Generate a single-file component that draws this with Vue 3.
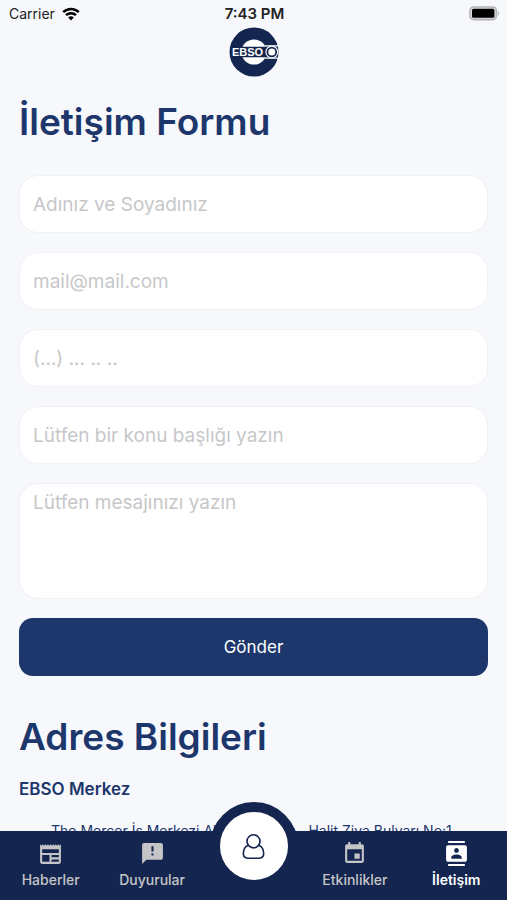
<template>
    <div class="screen">
        <header class="header">
            <div class="status-bar">
                <div class="carrier">
                    <span>Carrier</span>
                    <svg class="wifi" viewBox="0 0 18 14" aria-hidden="true">
                        <path d="M1.2 5.2a11.2 11.2 0 0 1 15.6 0" />
                        <path d="M4 8.2a7.2 7.2 0 0 1 10 0" />
                        <path class="wifi-dot" d="M9 13.4 6.2 10.6a4 4 0 0 1 5.6 0z" />
                    </svg>
                </div>
                <span class="clock">7:43 PM</span>
                <svg class="battery" viewBox="0 0 31 15" aria-hidden="true">
                    <rect x="1" y="1" width="26.4" height="12.6" rx="3.6" fill="#dcdde0" stroke="#b3b4b7" stroke-width="1.6" />
                    <rect x="3" y="2.8" width="22.4" height="9" rx="1.6" fill="#000" />
                    <path d="M28.8 5q2.2 2.4 0 4.8z" fill="#a4a5a8" />
                </svg>
            </div>
            <svg class="logo" viewBox="0 0 50 50" role="img" aria-label="EBSO">
                <circle cx="25" cy="25" r="24.5" fill="#14264f" />
                <circle cx="25" cy="25" r="12.6" fill="#fff" />
                <path d="M3 19.8h46v10.4H3z" fill="#14264f" />
                <path d="M36 18.2h14v1.4H36zM36 30.4h14v1.4H36z" fill="#fff" />
                <circle cx="42.8" cy="25" r="6.4" fill="#fff" />
                <circle cx="42.8" cy="25" r="4.4" fill="#fff" stroke="#14264f" stroke-width="1.8" />
                <text x="3" y="29" class="logo-text">EBSO</text>
            </svg>
        </header>

        <main class="content">
            <h1 class="title">İletişim Formu</h1>

            <form class="form" @submit.prevent="handleSubmit">
                <input
                    v-for="field in fields"
                    :key="field.name"
                    v-model="form[field.name]"
                    class="field"
                    :type="field.type"
                    :name="field.name"
                    :placeholder="field.placeholder"
                    :aria-label="field.placeholder"
                />
                <textarea
                    v-model="form.message"
                    class="field field-message"
                    name="message"
                    placeholder="Lütfen mesajınızı yazın"
                    aria-label="Lütfen mesajınızı yazın"
                ></textarea>
                <button type="submit" class="submit">Gönder</button>
            </form>

            <section class="addresses">
                <h2 class="title">Adres Bilgileri</h2>
                <h3 class="branch">EBSO Merkez</h3>
                <div class="address">
                    <svg class="pin" viewBox="0 0 18 22" aria-hidden="true">
                        <path d="M9 2a7 7 0 0 0-7 7c0 5 7 12 7 12s7-7 7-12a7 7 0 0 0-7-7z" />
                        <circle cx="9" cy="9" r="2.5" />
                    </svg>
                    <span>The Mercer İş Merkezi Alsancak Mah., Halit Ziya Bulvarı No:1</span>
                </div>
            </section>
        </main>

        <nav class="tab-bar">
            <a
                v-for="tab in tabs"
                :key="tab.label"
                href="#"
                class="tab"
                :class="[{ active: tab.active }, tab.side]"
                @click.prevent
            >
                <svg class="tab-icon" viewBox="0 0 24 24" aria-hidden="true">
                    <path :d="tab.icon" />
                </svg>
                <span>{{ tab.label }}</span>
            </a>
            <button type="button" class="profile" aria-label="Profil">
                <svg viewBox="0 0 24 28" aria-hidden="true">
                    <circle cx="12" cy="8.6" r="6.8" />
                    <path d="M6.4 12.6C3 14 1.4 17.4 1.4 21.4c0 3.2 1.6 4.8 4.6 4.8h12c3 0 4.600-1.600 4.600-4.800 0-4-1.600-7.400-5-8.800" />
                </svg>
            </button>
        </nav>
    </div>
</template>

<script setup>
import { reactive } from 'vue'

const form = reactive({
    name: '',
    email: '',
    phone: '',
    subject: '',
    message: '',
})

const fields = [
    { name: 'name', type: 'text', placeholder: 'Adınız ve Soyadınız' },
    { name: 'email', type: 'email', placeholder: 'mail@mail.com' },
    { name: 'phone', type: 'tel', placeholder: '(...) ... .. ..' },
    { name: 'subject', type: 'text', placeholder: 'Lütfen bir konu başlığı yazın' },
]

const tabs = [
    {
        label: 'Haberler',
        icon: 'M2 3l1.25 1.5L4.5 3l1.25 1.5L7 3l1.25 1.5L9.5 3l1.25 1.5L12 3l1.25 1.5L14.5 3l1.25 1.5L17 3l1.25 1.5L19.5 3l1.25 1.5L22 3v17c0 1.1-.9 2-2 2H4c-1.1 0-2-.9-2-2V3zM4 8v3.5h16V8H4zm0 5.5V20h7v-6.5H4zm9 0v2.2h7v-2.2h-7zm0 4.2V20h7v-2.3h-7z',
    },
    {
        label: 'Duyurular',
        icon: 'M20 2H4c-1.1 0-1.99.9-1.99 2L2 22l4-4h14c1.1 0 2-.9 2-2V4c0-1.1-.9-2-2-2zm-7 12h-2v-2h2v2zm0-4h-2V5h2v5z',
    },
    {
        label: 'Etkinlikler',
        side: 'after-profile',
        icon: 'M17 12h-5v5h5v-5zM16 1v2H8V1H6v2H5c-1.11 0-1.99.9-1.99 2L3 19c0 1.1.89 2 2 2h14c1.1 0 2-.9 2-2V5c0-1.1-.9-2-2-2h-1V1h-2zm3 18H5V8h14v11z',
    },
    {
        label: 'İletişim',
        active: true,
        icon: 'M20 0H4v2h16V0zM4 24h16v-2H4v2zM20 4H4c-1.1 0-2 .9-2 2v12c0 1.1.9 2 2 2h16c1.1 0 2-.9 2-2V6c0-1.1-.9-2-2-2zm-8 2.75c1.24 0 2.25 1.01 2.25 2.25s-1.01 2.25-2.25 2.25S9.75 10.24 9.75 9 10.76 6.75 12 6.75zM17 17H7v-1.5c0-1.67 3.33-2.5 5-2.5s5 .83 5 2.5V17z',
    },
]

const handleSubmit = () => {
    Object.keys(form).forEach(key => {
        form[key] = ''
    })
}
</script>

<style>
body {
    background-color: #f6f8fc;
}
</style>

<style scoped>
.screen {
    display: flex;
    flex-direction: column;
    height: 100vh;
    background-color: #f6f8fc;
    font-family: 'Inter', 'Liberation Sans', sans-serif;
}

.header {
    display: flex;
    flex-direction: column;
    align-items: center;
    flex: none;
}

.status-bar {
    display: grid;
    grid-template-columns: 1fr auto 1fr;
    align-items: center;
    box-sizing: border-box;
    width: 100%;
    height: 27px;
    padding: 0 7px 0 9px;
    font-size: 14px;
    color: #222;
}

.carrier {
    display: flex;
    align-items: center;
    gap: 7px;
}

.wifi {
    width: 18px;
    height: 14px;
    fill: none;
    stroke: #000;
    stroke-width: 2.4;
}

.wifi .wifi-dot {
    fill: #000;
    stroke: none;
}

.clock {
    font-size: 15px;
    font-weight: 600;
}

.battery {
    width: 31px;
    height: 15px;
    justify-self: end;
}

.logo {
    width: 50px;
    height: 50px;
}

.logo-text {
    font-family: 'Liberation Sans', sans-serif;
    font-size: 11px;
    font-weight: 700;
    fill: #fff;
}

.content {
    flex: 1;
    min-height: 0;
    overflow: hidden;
    padding: 21px 19px 0;
}

.title {
    margin: 0;
    font-size: 37px;
    line-height: 48px;
    font-weight: 600;
    color: #1d376c;
}

.form {
    display: flex;
    flex-direction: column;
    gap: 19px;
    margin-top: 29px;
}

.field {
    box-sizing: border-box;
    width: 100%;
    height: 58px;
    margin: 0;
    padding: 0 13px;
    border: 1px solid #eff1f4;
    border-radius: 19px;
    background-color: #fff;
    font-family: inherit;
    font-size: 19px;
    color: #1d376c;
    outline: none;
}

.field::placeholder {
    color: #c7c7c9;
    opacity: 1;
}

.field-message {
    display: block;
    height: 116px;
    padding: 7px 13px;
    line-height: 24px;
    resize: none;
}

.submit {
    height: 58px;
    border: none;
    border-radius: 14px;
    background-color: #1d376c;
    font-family: inherit;
    font-size: 17px;
    color: #fff;
    cursor: pointer;
}

.addresses {
    margin-top: 37px;
}

.branch {
    margin: 16px 0 0;
    font-size: 17px;
    line-height: 24px;
    font-weight: 600;
    color: #1d376c;
}

.address {
    display: flex;
    align-items: flex-start;
    gap: 14px;
    margin-top: 20px;
    font-size: 14px;
    line-height: 20px;
    white-space: nowrap;
    color: #1d376c;
}

.pin {
    flex: none;
    width: 18px;
    height: 22px;
    margin-top: 9px;
    fill: none;
    stroke: #1d376c;
    stroke-width: 2;
}

.tab-bar {
    position: relative;
    display: grid;
    grid-template-columns: repeat(5, 1fr);
    flex: none;
    height: 69px;
    background-color: #14264f;
}

.tab {
    display: flex;
    flex-direction: column;
    align-items: center;
    gap: 4px;
    padding-top: 10px;
    font-size: 14px;
    line-height: 20px;
    font-weight: 500;
    text-decoration: none;
    color: #c5c5c7;
}

.tab.after-profile {
    grid-column: 4;
}

.tab.active {
    font-weight: 600;
    color: #fff;
}

.tab-icon {
    width: 25px;
    height: 25px;
    fill: currentColor;
}

.profile {
    position: absolute;
    left: 50%;
    bottom: 10px;
    display: flex;
    align-items: center;
    justify-content: center;
    box-sizing: border-box;
    width: 88px;
    height: 88px;
    padding: 0;
    border: 10px solid #14264f;
    border-radius: 50%;
    background-color: #fff;
    transform: translateX(-50%);
    cursor: pointer;
}

.profile svg {
    width: 23px;
    height: 27px;
    fill: none;
    stroke: #14264f;
    stroke-width: 1.7;
    stroke-linecap: round;
}
</style>
